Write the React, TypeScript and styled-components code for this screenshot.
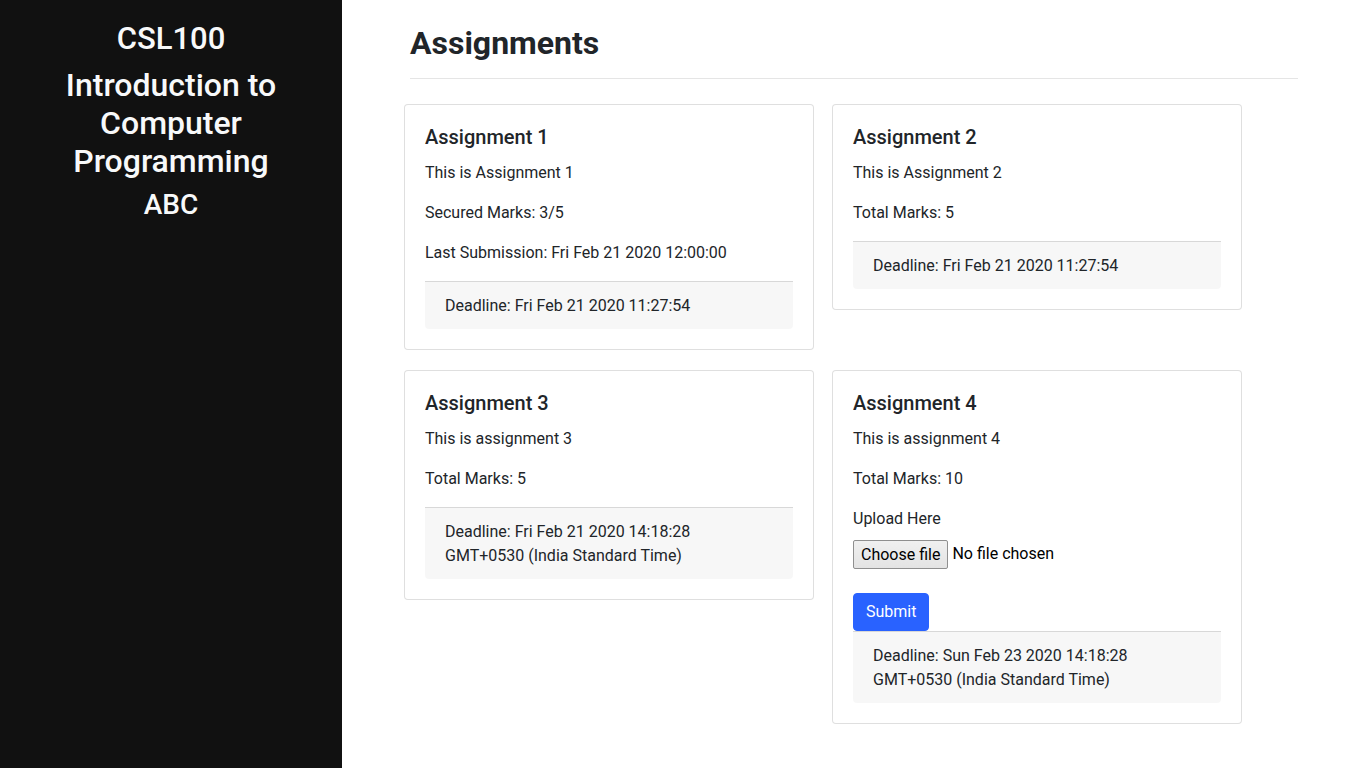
import React from "react";
import styled, { createGlobalStyle } from "styled-components";

const Global = createGlobalStyle`
  * { box-sizing: border-box; }
  html, body { margin: 0; padding: 0; background: #fff; }
  body { font-family: Roboto, "Liberation Sans", sans-serif; font-size: 16px; line-height: 1.5; color: #212529; }
`;

const Layout = styled.div`
  display: flex;
  min-height: 768px;
`;

const Sidebar = styled.aside`
  width: 342px;
  flex-shrink: 0;
  background: #111111;
  color: #f8f9fa;
  text-align: center;
  padding-top: 20px;
  min-height: 768px;
`;

const CourseCode = styled.h3`
  margin: 0 0 8px;
  font-size: 31px;
  font-weight: 500;
  line-height: 38px;
`;

const CourseName = styled.h2`
  margin: 0 0 8px;
  font-size: 32px;
  font-weight: 500;
  line-height: 38px;
  padding: 0 40px;
`;

const Instructor = styled.h3`
  margin: 0;
  font-size: 28px;
  font-weight: 500;
  line-height: 1.2;
`;

const Main = styled.main`
  flex: 1;
  padding: 24px 68px 40px;
`;

const Title = styled.h1`
  margin: 0;
  font-size: 32px;
  font-weight: 700;
  line-height: 38px;
`;

const Rule = styled.hr`
  margin: 16px 0 25px;
  border: 0;
  border-top: 1px solid rgba(0, 0, 0, 0.1);
`;

const Grid = styled.div`
  display: grid;
  grid-template-columns: 410px 410px;
  column-gap: 18px;
  row-gap: 20px;
  align-items: start;
  margin-left: -6px;
`;

const Card = styled.div`
  border: 1px solid rgba(0, 0, 0, 0.125);
  border-radius: 4px;
  background: #fff;
`;

const Body = styled.div`
  padding: 20px;
`;

const CardTitle = styled.h5`
  margin: 0 0 12px;
  font-size: 20px;
  font-weight: 500;
  line-height: 1.2;
`;

const Text = styled.p`
  margin: 0 0 16px;
`;

const Footer = styled.div`
  background: rgba(0, 0, 0, 0.03);
  border-top: 1px solid rgba(0, 0, 0, 0.125);
  padding: 12px 20px 11px;
  border-radius: 0 0 4px 4px;
`;

const Label = styled.label`
  display: block;
  margin-bottom: 8px;
`;

const FilePicker = styled.div`
  display: flex;
  align-items: center;
  gap: 4px;
  height: 30px;
  margin-bottom: 24px;
  color: #000;
`;

const FileButton = styled.button`
  height: 29px;
  padding: 0 7px;
  border: 1px solid #8f8f8f;
  border-radius: 2px;
  background: linear-gradient(#f0f0f0, #e3e3e3);
  color: #000;
  font-family: Roboto, "Liberation Sans", sans-serif;
  font-size: 16px;
  line-height: 27px;
`;

const FileStatus = styled.span`
  font-size: 16px;
`;

const SubmitButton = styled.button`
  display: block;
  background: #2962ff;
  color: #fff;
  border: 1px solid #2962ff;
  border-radius: 4px;
  padding: 6px 12px;
  font-family: Roboto, "Liberation Sans", sans-serif;
  font-size: 16px;
  line-height: 24px;
`;

type A = {
  title: string;
  desc: string;
  lines: string[];
  deadline: string[];
  upload?: boolean;
};

const items: A[] = [
  {
    title: "Assignment 1",
    desc: "This is Assignment 1",
    lines: ["Secured Marks: 3/5", "Last Submission: Fri Feb 21 2020 12:00:00"],
    deadline: ["Deadline: Fri Feb 21 2020 11:27:54"],
  },
  {
    title: "Assignment 2",
    desc: "This is Assignment 2",
    lines: ["Total Marks: 5"],
    deadline: ["Deadline: Fri Feb 21 2020 11:27:54"],
  },
  {
    title: "Assignment 3",
    desc: "This is assignment 3",
    lines: ["Total Marks: 5"],
    deadline: ["Deadline: Fri Feb 21 2020 14:18:28", "GMT+0530 (India Standard Time)"],
  },
  {
    title: "Assignment 4",
    desc: "This is assignment 4",
    lines: ["Total Marks: 10"],
    deadline: ["Deadline: Sun Feb 23 2020 14:18:28", "GMT+0530 (India Standard Time)"],
    upload: true,
  },
];

export default function App() {
  return (
    <>
      <Global />
      <Layout>
        <Sidebar>
          <CourseCode>CSL100</CourseCode>
          <CourseName>Introduction to Computer Programming</CourseName>
          <Instructor>ABC</Instructor>
        </Sidebar>
        <Main>
          <Title>Assignments</Title>
          <Rule />
          <Grid>
            {items.map((a) => (
              <Card key={a.title}>
                <Body>
                  <CardTitle>{a.title}</CardTitle>
                  <Text>{a.desc}</Text>
                  {a.lines.map((l) => (
                    <Text key={l}>{l}</Text>
                  ))}
                  {a.upload && (
                    <>
                      <Label>Upload Here</Label>
                      <FilePicker>
                        <FileButton type="button">Choose file</FileButton>
                        <FileStatus>No file chosen</FileStatus>
                      </FilePicker>
                      <SubmitButton>Submit</SubmitButton>
                    </>
                  )}
                  <Footer>
                    {a.deadline.map((d) => (
                      <div key={d}>{d}</div>
                    ))}
                  </Footer>
                </Body>
              </Card>
            ))}
          </Grid>
        </Main>
      </Layout>
    </>
  );
}
